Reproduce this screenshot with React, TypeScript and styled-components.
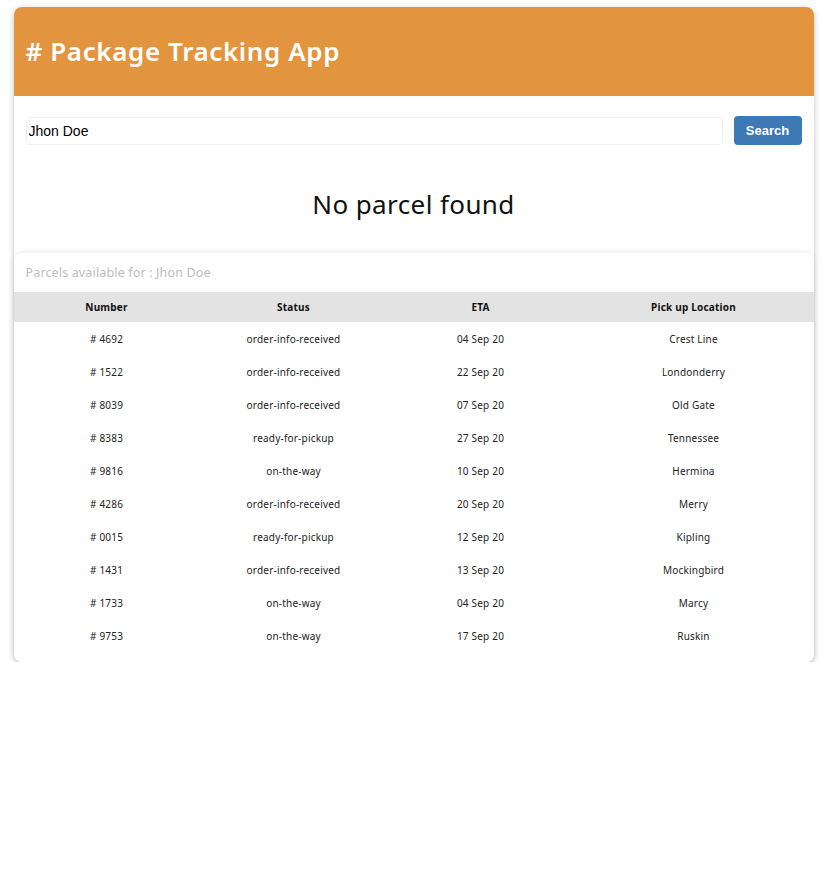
import React from "react";
import styled, { createGlobalStyle } from "styled-components";

const Global = createGlobalStyle`
  html, body { margin: 0; padding: 0; background: #fff; }
  body { font-family: "Noto Sans", "Open Sans", sans-serif; }
`;

const Page = styled.div`
  width: 800px;
  margin: 7px auto 0;
`;

const Card = styled.div`
  background: #fff;
  border-radius: 8px;
  box-shadow: 0 2px 6px rgba(0, 0, 0, 0.25);
`;

const Header = styled.header`
  background: #e3943f;
  height: 89px;
  border-radius: 8px 8px 0 0;
  display: flex;
  align-items: center;
  padding: 0 12px 2px;
  box-sizing: border-box;
`;

const Title = styled.h1`
  margin: 0;
  color: #fff;
  font-family: "Noto Sans", sans-serif;
  font-weight: 600;
  font-size: 26px;
  letter-spacing: 0.6px;
`;

const SearchRow = styled.form`
  display: flex;
  align-items: center;
  gap: 11px;
  padding: 20px 12px 0;
`;

const Input = styled.input`
  flex: 1;
  height: 28px;
  box-sizing: border-box;
  border: 1px solid #efefef;
  border-radius: 4px;
  padding: 0 2px;
  font-family: "Liberation Sans", Arial, sans-serif;
  font-size: 14px;
  color: #000;
  outline: none;
`;

const Button = styled.button`
  height: 29px;
  width: 68px;
  border: none;
  border-radius: 4px;
  background: #3d7ab5;
  color: #fff;
  font-family: "Liberation Sans", Arial, sans-serif;
  font-weight: bold;
  font-size: 13px;
  cursor: pointer;
`;

const Empty = styled.p`
  margin: 0;
  padding: 42px 0 32px;
  text-align: center;
  font-family: "Noto Sans", sans-serif;
  font-size: 26px;
  letter-spacing: 0.4px;
  color: #111;
  line-height: 34px;
`;

const TableCard = styled.section`
  background: #fff;
  border-radius: 8px;
  box-shadow: 0 -1px 5px rgba(0, 0, 0, 0.08);
  padding-bottom: 10px;
`;

const Caption = styled.div`
  height: 39px;
  display: flex;
  align-items: center;
  padding: 0 12px;
  font-size: 12.5px;
  letter-spacing: 0.15px;
  color: #bdbdbd;
`;

const Table = styled.table`
  width: 100%;
  border-collapse: collapse;
  table-layout: fixed;
`;

const Th = styled.th<{ $w: number }>`
  width: ${(p) => p.$w}px;
  height: 30px;
  background: #e3e3e3;
  font-size: 10px;
  font-weight: 700;
  letter-spacing: 0.2px;
  color: #111;
  text-align: center;
  padding: 0;
`;

const Td = styled.td`
  height: 33px;
  font-size: 10px;
  letter-spacing: 0.2px;
  color: #222;
  text-align: center;
  padding: 0;
`;

const rows = [
  ["4692", "order-info-received", "04 Sep 20", "Crest Line"],
  ["1522", "order-info-received", "22 Sep 20", "Londonderry"],
  ["8039", "order-info-received", "07 Sep 20", "Old Gate"],
  ["8383", "ready-for-pickup", "27 Sep 20", "Tennessee"],
  ["9816", "on-the-way", "10 Sep 20", "Hermina"],
  ["4286", "order-info-received", "20 Sep 20", "Merry"],
  ["0015", "ready-for-pickup", "12 Sep 20", "Kipling"],
  ["1431", "order-info-received", "13 Sep 20", "Mockingbird"],
  ["1733", "on-the-way", "04 Sep 20", "Marcy"],
  ["9753", "on-the-way", "17 Sep 20", "Ruskin"],
];

const cols: [string, number][] = [
  ["Number", 186],
  ["Status", 188],
  ["ETA", 186],
  ["Pick up Location", 240],
];

export default function App() {
  return (
    <>
      <Global />
      <Page>
        <Card>
          <Header>
            <Title># Package Tracking App</Title>
          </Header>
          <SearchRow onSubmit={(e) => e.preventDefault()}>
            <Input defaultValue="Jhon Doe" />
            <Button type="submit">Search</Button>
          </SearchRow>
          <Empty>No parcel found</Empty>
          <TableCard>
            <Caption>Parcels available for : Jhon Doe</Caption>
            <Table>
              <thead>
                <tr>
                  {cols.map(([c, w]) => (
                    <Th key={c} $w={w}>
                      {c}
                    </Th>
                  ))}
                </tr>
              </thead>
              <tbody>
                {rows.map((r) => (
                  <tr key={r[0]}>
                    <Td># {r[0]}</Td>
                    <Td>{r[1]}</Td>
                    <Td>{r[2]}</Td>
                    <Td>{r[3]}</Td>
                  </tr>
                ))}
              </tbody>
            </Table>
          </TableCard>
        </Card>
      </Page>
    </>
  );
}
